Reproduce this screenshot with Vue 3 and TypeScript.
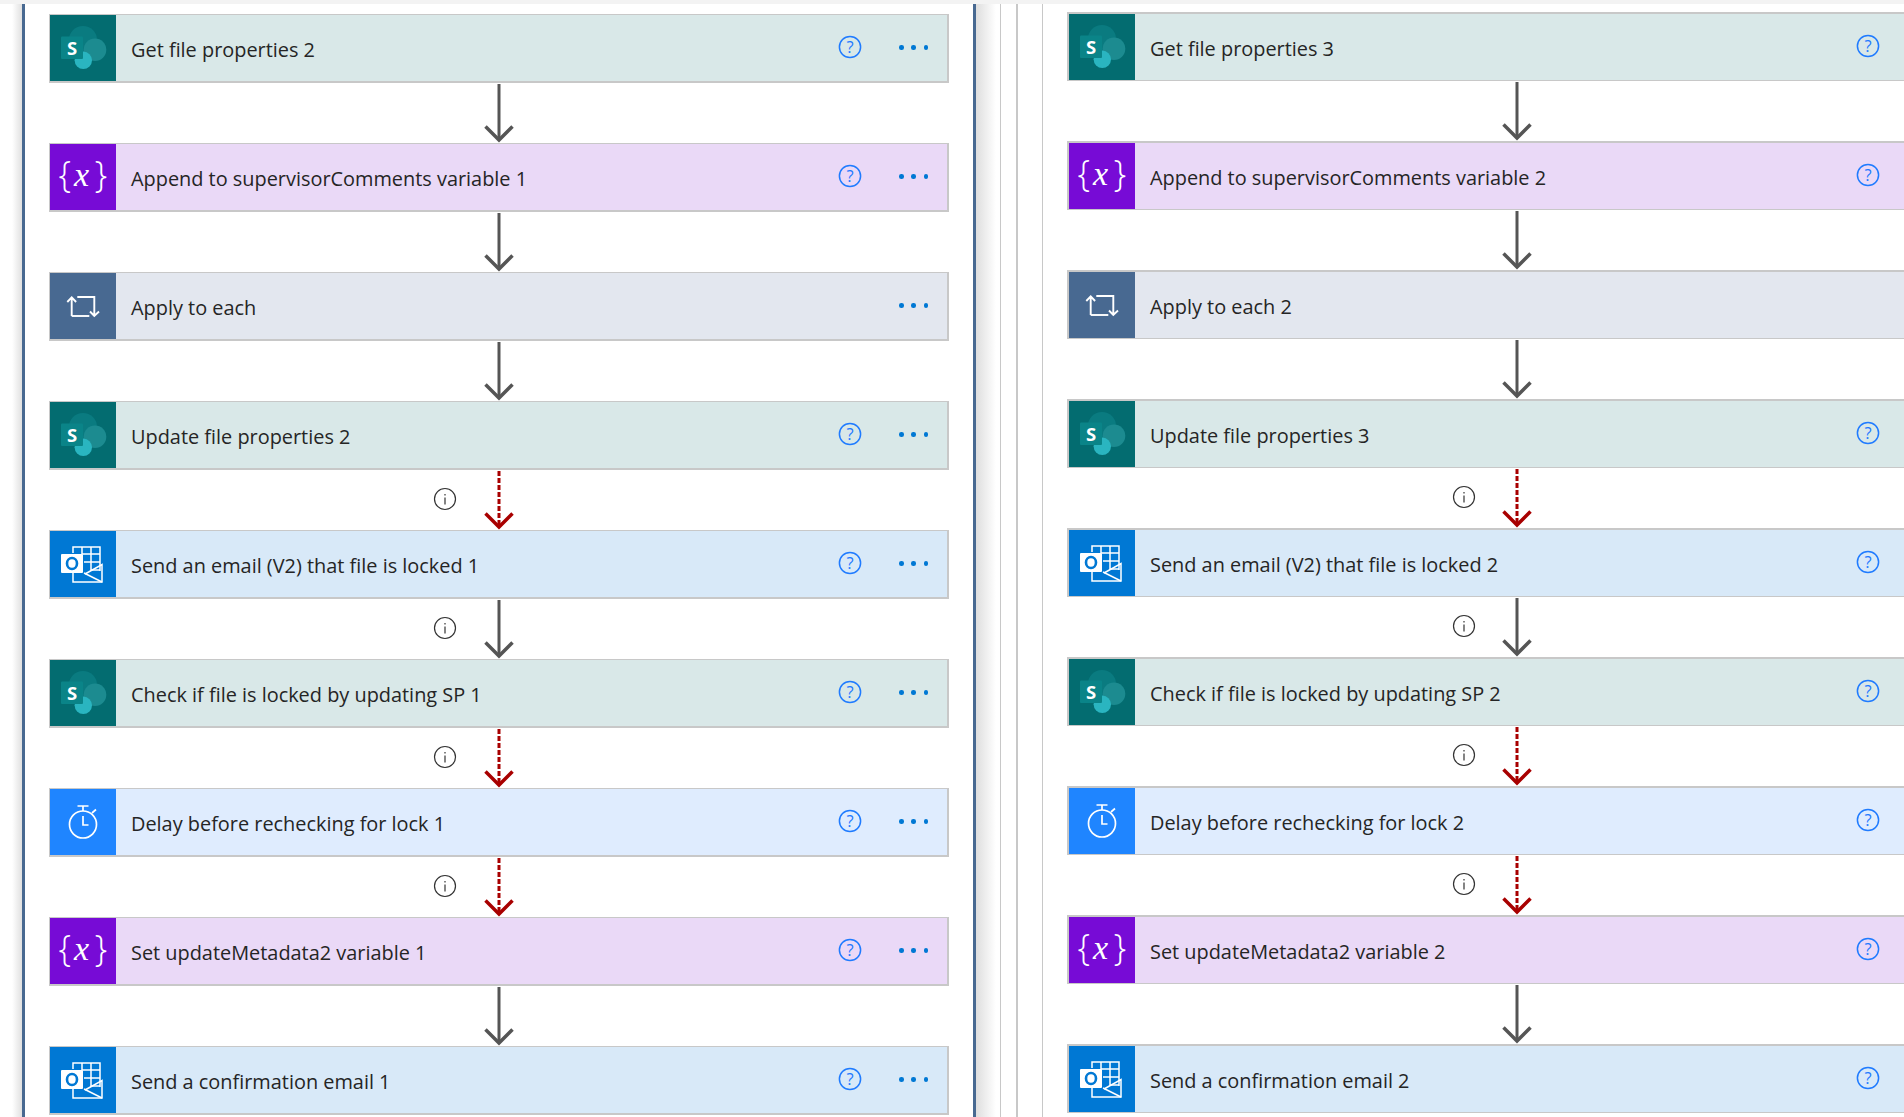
<script setup lang="ts">
type Kind = 'sp' | 'variable' | 'loop' | 'mail' | 'delay'
type Link = 'solid' | 'solid-info' | 'failed-info' | 'none'

interface Step {
  title: string
  kind: Kind
  help: boolean
  link: Link
}

const buildSteps = (branch: number): Step[] => [
  { title: `Get file properties ${branch + 1}`, kind: 'sp', help: true, link: 'solid' },
  { title: `Append to supervisorComments variable ${branch}`, kind: 'variable', help: true, link: 'solid' },
  { title: branch === 1 ? 'Apply to each' : `Apply to each ${branch}`, kind: 'loop', help: false, link: 'solid' },
  { title: `Update file properties ${branch + 1}`, kind: 'sp', help: true, link: 'failed-info' },
  { title: `Send an email (V2) that file is locked ${branch}`, kind: 'mail', help: true, link: 'solid-info' },
  { title: `Check if file is locked by updating SP ${branch}`, kind: 'sp', help: true, link: 'failed-info' },
  { title: `Delay before rechecking for lock ${branch}`, kind: 'delay', help: true, link: 'failed-info' },
  { title: `Set updateMetadata2 variable ${branch}`, kind: 'variable', help: true, link: 'solid' },
  { title: `Send a confirmation email ${branch}`, kind: 'mail', help: true, link: 'none' }
]

const branches = [
  { id: 'left', steps: buildSteps(1) },
  { id: 'right', steps: buildSteps(2) }
]
</script>

<template>
  <div class="page">
    <div class="top-band"></div>
    <div class="canvas">
      <div class="shadow-left"></div>
      <section v-for="branch in branches" :key="branch.id" :class="['branch', branch.id]">
        <template v-for="step in branch.steps" :key="step.title">
          <div :class="['card', step.kind]">
            <div class="icon">
              <svg v-if="step.kind === 'sp'" viewBox="0 0 66 66" width="66" height="66">
                <circle cx="33" cy="25" r="14" fill="#0a7b80" />
                <circle cx="45" cy="34.700" r="11.300" fill="#1c8b90" />
                <circle cx="33.300" cy="45.300" r="8.700" fill="#2ab5c0" />
                <rect x="11" y="21.500" width="22" height="22.500" rx="1" fill="#0a8488" />
                <text x="22" y="39.500" class="sp-letter">S</text>
              </svg>
              <svg v-else-if="step.kind === 'variable'" viewBox="0 0 66 66" width="66" height="66">
                <text x="8.500" y="43" class="brace">{</text>
                <text x="24" y="42" class="var-x">x</text>
                <text x="44.500" y="43" class="brace">}</text>
              </svg>
              <svg v-else-if="step.kind === 'loop'" viewBox="0 0 66 66" width="66" height="66" fill="none" stroke="#fff" stroke-width="1.900">
                <path d="M21.700 43V24M17.300 29l4.400-4.600 4.400 4.600" />
                <path d="M27.300 24h17v19M40 38.500l4.300 4.500 4.700-4.500" />
                <path d="M21.700 43H39.300" />
              </svg>
              <svg v-else-if="step.kind === 'mail'" viewBox="0 0 66 66" width="66" height="66" fill="none" stroke="#fff" stroke-width="1.500">
                <path d="M23 22V16h27v24M32 16v7M41 16v24M32 23h18M34 31h16M41 39h9" />
                <path d="M23 42v9h29V33.500L35 43" />
                <path d="M34 42l18 9" />
                <rect x="11" y="23" width="22" height="19" rx="1" fill="#fff" stroke="none" />
                <ellipse cx="22" cy="32.500" rx="5" ry="5.500" stroke="#0078d4" stroke-width="2.600" />
              </svg>
              <svg v-else viewBox="0 0 66 66" width="66" height="66" fill="none" stroke="#fff" stroke-width="1.700">
                <circle cx="33" cy="35.500" r="13.500" />
                <path d="M27.500 17h11M33 17v5M42 24l4-3.500" />
                <path d="M33 27v9h5.500" />
              </svg>
            </div>
            <span class="title">{{ step.title }}</span>
            <svg v-if="step.help" class="help" viewBox="0 0 24 24" width="24" height="24">
              <circle cx="12" cy="12" r="10.600" fill="none" stroke="#1f7bff" stroke-width="1.500" />
              <text x="12" y="18" class="help-mark">?</text>
            </svg>
            <div class="more">
              <i></i><i></i><i></i>
            </div>
          </div>
          <div v-if="step.link !== 'none'" class="link">
            <svg v-if="step.link !== 'solid'" class="info" viewBox="0 0 24 24" width="24" height="24">
              <circle cx="12" cy="12" r="10.500" fill="none" stroke="#333" stroke-width="1.200" />
              <path d="M12 10.500v7M12 7v1.600" stroke="#333" stroke-width="1.200" />
            </svg>
            <svg
              class="arrow"
              viewBox="0 0 30 60"
              width="30"
              height="60"
              fill="none"
              :stroke="step.link === 'failed-info' ? '#a80000' : '#555'"
              stroke-width="3"
            >
              <path d="M15 1v56" :stroke-dasharray="step.link === 'failed-info' ? '5 2' : undefined" />
              <path d="M1.500 43.500 15 57l13.500-13.500" stroke-width="3.500" />
            </svg>
          </div>
        </template>
      </section>
    </div>
  </div>
</template>

<style>
html,
body {
  margin: 0;
  background: #fff;
  overflow: hidden;
}
</style>

<style scoped>
.page {
  height: 1117px;
  display: flex;
  flex-direction: column;
  overflow: hidden;
  font-family: 'Open Sans', 'Noto Sans', sans-serif;
}

.top-band {
  height: 4px;
  flex: none;
  background: #f3f3f3;
}

.canvas {
  flex: 1;
  display: flex;
  min-height: 0;
}

.shadow-left {
  width: 22px;
  flex: none;
  background: linear-gradient(to right, #fff 0%, #fff 55%, #e0e0e0 100%);
}

.branch {
  flex: none;
  box-sizing: border-box;
}

.branch.left {
  width: 954px;
  padding: 10px 0 0 24px;
  border-left: 3px solid #486991;
  border-right: 3px solid #486991;
}

.branch.right {
  /* shadow of the left panel, then the three guide lines */
  width: 928px;
  padding: 8px 0 0 91px;
  background:
    linear-gradient(#c8c8c8, #c8c8c8) 24px 0 / 1px 100% no-repeat,
    linear-gradient(#c8c8c8, #c8c8c8) 40px 0 / 2px 100% no-repeat,
    linear-gradient(#c8c8c8, #c8c8c8) 66px 0 / 1px 100% no-repeat,
    linear-gradient(to right, #dedede, #fff) 0 0 / 20px 100% no-repeat;
}

.card {
  width: 900px;
  height: 69px;
  box-sizing: border-box;
  display: flex;
  align-items: center;
  border-style: solid;
  border-color: #c8c8c8;
  border-width: 1px 2px 2px 1px;
}

.right .card {
  border-width: 2px 2px 1px 2px;
}

.icon {
  width: 66px;
  height: 66px;
  flex: none;
  align-self: flex-start;
}

.icon svg {
  display: block;
}

.title {
  flex: 1;
  margin-left: 15px;
  font-size: 19.900px;
  color: #252525;
  padding-top: 2px;
}

.help {
  flex: none;
  margin: 0 37px 2px 0;
}

.more {
  flex: none;
  width: 29px;
  margin: 0 19px 1px 0;
  display: flex;
  justify-content: space-between;
}

.more i {
  width: 4.500px;
  height: 4.500px;
  border-radius: 50%;
  background: #0078d4;
}

.sp {
  background: #d9e8e8;
}

.sp .icon {
  background: #036c70;
}

.variable {
  background: #ead9f7;
}

.variable .icon {
  background: #770bd6;
}

.loop {
  background: #e3e7ef;
}

.loop .icon {
  background: #486991;
}

.mail {
  background: #d8e9f8;
}

.mail .icon {
  background: #0078d4;
}

.delay {
  background: #dfecfe;
}

.delay .icon {
  background: #1f85ff;
}

.sp-letter {
  font: 700 18.500px 'Open Sans', sans-serif;
  fill: #fff;
  text-anchor: middle;
}

.brace {
  font: 300 36px 'Open Sans', sans-serif;
  fill: #fff;
}

.var-x {
  font: italic 34px 'Liberation Serif', serif;
  fill: #fff;
}

.help-mark {
  font: 400 16.500px 'Open Sans', sans-serif;
  fill: #1f7bff;
  text-anchor: middle;
}

.link {
  width: 900px;
  height: 60px;
  display: grid;
  grid-template-columns: 1fr 30px 1fr;
  align-items: center;
}

.arrow {
  grid-column: 2;
  grid-row: 1;
  display: block;
}

.info {
  grid-column: 1;
  grid-row: 1;
  justify-self: end;
  margin: -2px 27px 0 0;
}

.right .info {
  margin-right: 26px;
}
</style>
